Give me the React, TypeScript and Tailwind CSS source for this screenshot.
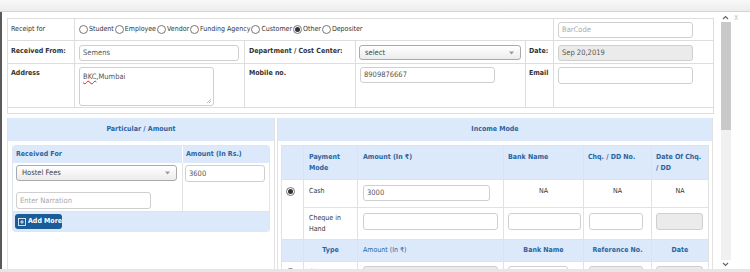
import React from "react";

const HB = "text-[#2a64a0] font-bold";

function Box({ w, h = 16, text, ph, grey, className = "" }: { w: number; h?: number; text?: string; ph?: string; grey?: boolean; className?: string }) {
  return (
    <div
      className={`border border-[#cfcfcf] rounded-[3px] px-[3px] flex items-center text-[7.5px] leading-none ${grey ? "bg-[#ebebeb]" : "bg-white"} ${className}`}
      style={{ width: w, height: h }}
    >
      {text ? <span className="text-[#555]">{text}</span> : ph ? <span className="text-[#aaa]">{ph}</span> : null}
    </div>
  );
}

function Select({ w, h = 15, text }: { w: number; h?: number; text: string }) {
  return (
    <div
      className="border border-[#aaa] rounded-[3px] pl-[5px] pr-[6px] flex items-center justify-between bg-gradient-to-b from-white to-[#ececec] text-[7.5px] leading-none text-[#444]"
      style={{ width: w, height: h }}
    >
      <span>{text}</span>
      <svg width="5" height="4" viewBox="0 0 5 4"><path d="M0 0.5h5L2.5 3.5z" fill="#999" /></svg>
    </div>
  );
}

function Radio({ checked }: { checked?: boolean }) {
  return (
    <span className="inline-flex w-[9px] h-[9px] rounded-full border border-[#777] bg-white items-center justify-center shrink-0">
      {checked && <span className="w-[5px] h-[5px] rounded-full bg-[#333]" />}
    </span>
  );
}

export default function App() {
  const radios = ["Student", "Employee", "Vendor", "Funding Agency", "Customer", "Other", "Depositer"];
  return (
    <div className="w-[750px] h-[272px] bg-white overflow-hidden font-['DejaVu_Sans_Condensed','DejaVu_Sans',sans-serif] text-[7px] leading-[11px] text-[#333]">
      <div className="h-[12px] bg-gradient-to-b from-[#f8f8f8] to-[#ededed] border-b border-[#d4d4d4]" />
      <div className="flex h-[257px]">
        <div className="w-[2px] bg-[#5a5a5a]" />
        <div className="w-[716px] pl-[5px] pt-[6px] overflow-hidden">
          {/* top table */}
          <table className="table-fixed w-[706px]">
            <colgroup>
              <col className="w-[67px]" />
              <col className="w-[170px]" />
              <col className="w-[111px]" />
              <col className="w-[170px]" />
              <col className="w-[28px]" />
              <col className="w-[160px]" />
            </colgroup>
            <tbody>
              <tr className="h-[22px]">
                <td className="border border-[#dddddd] pl-[3px] align-middle">Receipt for</td>
                <td colSpan={4} className="border border-[#dddddd] pl-[4px] align-middle">
                  <div className="flex items-center">
                    {radios.map((r) => (
                      <span key={r} className="flex items-center gap-[1px] mr-[1px]">
                        <Radio checked={r === "Other"} />
                        <span>{r}</span>
                      </span>
                    ))}
                  </div>
                </td>
                <td className="border border-[#dddddd] pl-[4px] align-middle">
                  <Box w={135} ph="BarCode" />
                </td>
              </tr>
              <tr className="h-[23px]">
                <td className="border border-[#dddddd] pl-[3px] align-top pt-[5px] font-bold whitespace-nowrap">Received From:</td>
                <td className="border border-[#dddddd] pl-[4px] align-top pt-[4px]">
                  <Box w={160} text="Semens" />
                </td>
                <td className="border border-[#dddddd] pl-[4px] align-top pt-[5px] font-bold whitespace-nowrap">Department / Cost Center:</td>
                <td className="border border-[#dddddd] pl-[3px] align-top pt-[4px]">
                  <Select w={162} text="select" />
                </td>
                <td className="border border-[#dddddd] pl-[3px] align-top pt-[5px] font-bold">Date:</td>
                <td className="border border-[#dddddd] pl-[4px] align-top pt-[4px]">
                  <Box w={135} grey text="Sep 20,2019" />
                </td>
              </tr>
              <tr className="h-[44px]">
                <td className="border border-[#dddddd] pl-[3px] align-top pt-[4px] font-bold">Address</td>
                <td className="border border-[#dddddd] pl-[4px] align-top pt-[3px]">
                  <div className="relative w-[135px] h-[39px] border border-[#cfcfcf] rounded-[3px] bg-white px-[3px] pt-[3px] text-[7.5px] text-[#555]">
                    <span className="underline decoration-wavy decoration-[#e02020] decoration-[1px]">BKC</span>,Mumbai
                    <svg className="absolute right-[1px] bottom-[1px]" width="6" height="6" viewBox="0 0 6 6">
                      <path d="M5 1L1 5M5 3L3 5" stroke="#aaa" strokeWidth="0.8" />
                    </svg>
                  </div>
                </td>
                <td className="border border-[#dddddd] pl-[4px] align-top pt-[4px] font-bold">Mobile no.</td>
                <td className="border border-[#dddddd] pl-[4px] align-top pt-[3px]">
                  <Box w={135} text="8909876667" />
                </td>
                <td className="border border-[#dddddd] pl-[3px] align-top pt-[4px] font-bold">Email</td>
                <td className="border border-[#dddddd] pl-[4px] align-top pt-[3px]">
                  <Box w={135} h={17} />
                </td>
              </tr>
              <tr className="h-[6px]">
                <td colSpan={6} className="border border-[#dddddd]" />
              </tr>
            </tbody>
          </table>

          {/* panels */}
          <div className="flex gap-[2px] mt-[4px]">
            {/* left panel */}
            <div className="w-[268px] border-x border-[#e2e2e2] h-[160px]">
              <div className={`h-[23px] bg-[#dce9fb] flex items-center justify-center ${HB}`}>Particular / Amount</div>
              <div className="pt-[4px] pl-[4px]">
                <div className="w-[258px] rounded-[3px] overflow-hidden border border-[#dde6f2]">
                  <div className="flex h-[17px] bg-[#dce9fb]">
                    <div className={`w-[170px] border-r border-[#ffffff] pl-[3px] flex items-center ${HB}`}>Received For</div>
                    <div className={`flex-1 pl-[3px] flex items-center ${HB}`}>Amount (In Rs.)</div>
                  </div>
                  <div className="flex h-[48px] bg-white">
                    <div className="w-[170px] border-r border-[#e2e2e2] pl-[3px] pt-[2px] flex flex-col gap-[11px]">
                      <Select w={161} h={16} text="Hostel Fees" />
                      <Box w={135} h={17} ph="Enter Narration" />
                    </div>
                    <div className="flex-1 pl-[2px] pt-[2px]">
                      <Box w={80} h={17} text="3600" />
                    </div>
                  </div>
                  <div className="h-[20px] bg-[#dce9fb] border-t border-[#e2e2e2] pl-[2px] pt-[2px]">
                    <div className="w-[47px] h-[15px] rounded-[3px] bg-[#1b5c98] text-white font-bold flex items-center gap-[2px] pl-[3px] whitespace-nowrap">
                      <svg width="8" height="8" viewBox="0 0 8 8" className="shrink-0">
                        <rect x="0.5" y="0.5" width="7" height="7" fill="none" stroke="#fff" strokeWidth="0.8" />
                        <path d="M4 2v4M2 4h4" stroke="#fff" strokeWidth="0.8" />
                      </svg>
                      <span>Add More</span>
                    </div>
                  </div>
                </div>
              </div>
            </div>

            {/* right panel */}
            <div className="w-[436px] border-x border-[#e2e2e2] h-[160px]">
              <div className={`h-[23px] bg-[#dce9fb] flex items-center justify-center ${HB}`}>Income Mode</div>
              <div className="pt-[4px] pl-[3px]">
                <table className="table-fixed w-[427px]">
                  <colgroup>
                    <col className="w-[22px]" />
                    <col className="w-[54px]" />
                    <col className="w-[146px]" />
                    <col className="w-[80px]" />
                    <col className="w-[68px]" />
                    <col className="w-[57px]" />
                  </colgroup>
                  <tbody>
                    <tr className="h-[34px] bg-[#dce9fb]">
                      <td className="border border-[#e2e2e2]" />
                      <td className={`border border-[#e2e2e2] align-top pt-[6px] pl-[5px] ${HB}`}>Payment<br />Mode</td>
                      <td className={`border border-[#e2e2e2] align-top pt-[6px] pl-[5px] ${HB}`}>Amount (In ₹)</td>
                      <td className={`border border-[#e2e2e2] align-top pt-[6px] pl-[4px] ${HB}`}>Bank Name</td>
                      <td className={`border border-[#e2e2e2] align-top pt-[6px] pl-[4px] ${HB}`}>Chq. / DD No.</td>
                      <td className={`border border-[#e2e2e2] align-top pt-[6px] pl-[4px] ${HB}`}>Date Of Chq.<br />/ DD</td>
                    </tr>
                    <tr className="h-[28px]">
                      <td rowSpan={2} className="border border-[#e2e2e2] align-top pt-[7px] pl-[4px]">
                        <Radio checked />
                      </td>
                      <td className="border border-[#e2e2e2] align-top pt-[6px] pl-[5px]">Cash</td>
                      <td className="border border-[#e2e2e2] align-top pt-[5px] pl-[5px]">
                        <Box w={127} text="3000" />
                      </td>
                      <td className="border border-[#e2e2e2] align-top pt-[6px] text-center">NA</td>
                      <td className="border border-[#e2e2e2] align-top pt-[6px] text-center">NA</td>
                      <td className="border border-[#e2e2e2] align-top pt-[6px] text-center">NA</td>
                    </tr>
                    <tr className="h-[32px]">
                      <td className="border border-[#e2e2e2] align-top pt-[5px] pl-[5px]">Cheque in<br />Hand</td>
                      <td className="border border-[#e2e2e2] align-top pt-[5px] pl-[5px]">
                        <Box w={135} h={17} />
                      </td>
                      <td className="border border-[#e2e2e2] align-top pt-[5px] pl-[4px]">
                        <Box w={73} h={17} />
                      </td>
                      <td className="border border-[#e2e2e2] align-top pt-[5px] pl-[5px]">
                        <Box w={54} h={17} />
                      </td>
                      <td className="border border-[#e2e2e2] align-top pt-[5px] pl-[4px]">
                        <Box w={47} h={17} grey />
                      </td>
                    </tr>
                    <tr className="h-[22px] bg-[#dce9fb]">
                      <td className="border border-[#e2e2e2]" />
                      <td className={`border border-[#e2e2e2] text-center ${HB}`}>Type</td>
                      <td className="border border-[#e2e2e2] pl-[5px] text-[#2a64a0]">Amount (In ₹)</td>
                      <td className={`border border-[#e2e2e2] text-center ${HB}`}>Bank Name</td>
                      <td className={`border border-[#e2e2e2] text-center ${HB}`}>Reference No.</td>
                      <td className={`border border-[#e2e2e2] text-center ${HB}`}>Date</td>
                    </tr>
                    <tr className="h-[28px]">
                      <td className="border border-[#e2e2e2] align-top pt-[6px] pl-[4px]">
                        <Radio />
                      </td>
                      <td className="border border-[#e2e2e2] align-top pt-[5px] pl-[5px]">Cheque</td>
                      <td className="border border-[#e2e2e2] align-top pt-[4px] pl-[5px]">
                        <Box w={135} h={17} grey />
                      </td>
                      <td className="border border-[#e2e2e2] align-top pt-[4px] pl-[4px]">
                        <Box w={60} h={17} />
                      </td>
                      <td className="border border-[#e2e2e2] align-top pt-[4px] pl-[5px]">
                        <Box w={54} h={17} grey />
                      </td>
                      <td className="border border-[#e2e2e2] align-top pt-[4px] pl-[4px]">
                        <Box w={47} h={17} grey />
                      </td>
                    </tr>
                  </tbody>
                </table>
              </div>
            </div>
          </div>
        </div>

        {/* scrollbar */}
        <div className="w-[32px] flex">
          <div className="ml-[2px] w-[11px] flex flex-col items-center">
            <div className="h-[10px] flex items-center justify-center">
              <svg width="7" height="5" viewBox="0 0 7 5"><path d="M1 4L3.5 1.5L6 4" fill="none" stroke="#666" strokeWidth="1.2" /></svg>
            </div>
            <div className="w-[10px] h-[108px] bg-[#c9c9c9]" />
            <div className="w-[10px] flex-1 bg-[#f0f0f0]" />
            <div className="h-[9px] flex items-center justify-center">
              <svg width="7" height="5" viewBox="0 0 7 5"><path d="M1 1L3.5 3.5L6 1" fill="none" stroke="#666" strokeWidth="1.2" /></svg>
            </div>
          </div>
          <div className="ml-[3px] pt-[1px] text-[#c4c4c4] text-[8px] leading-[10px]">x</div>
        </div>
      </div>
      <div className="h-[3px] bg-[#e6e6e6]" />
    </div>
  );
}
